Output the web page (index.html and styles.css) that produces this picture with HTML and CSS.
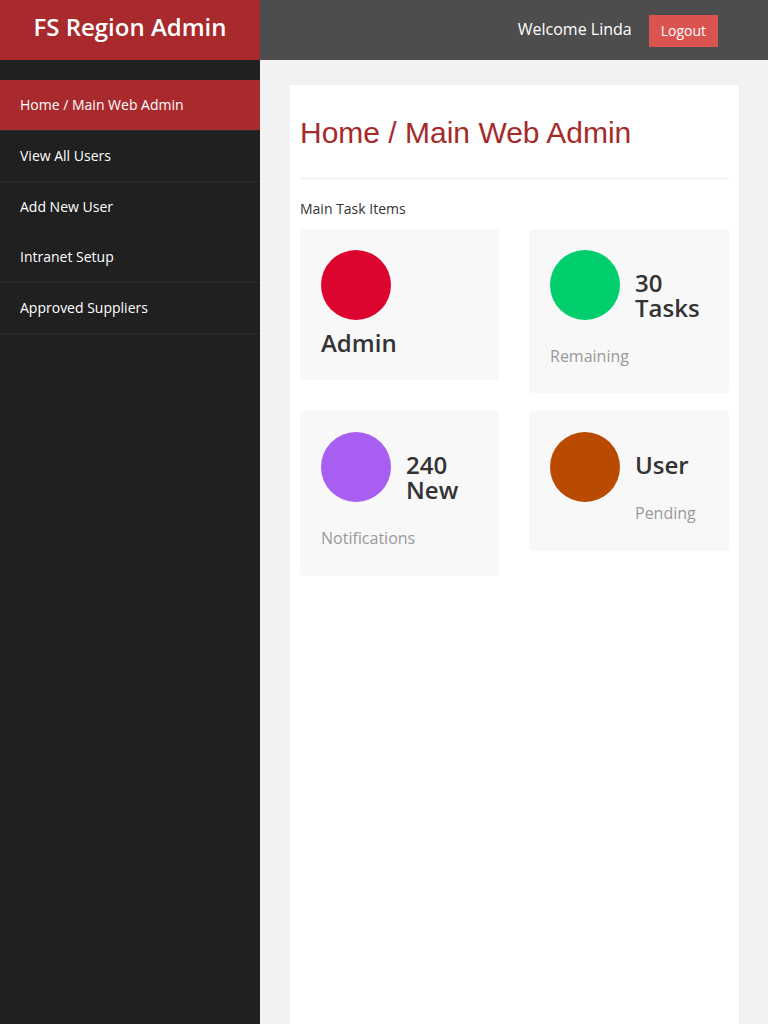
FILE: index.html
```html
<!DOCTYPE html>
<html lang="en">
<head>
<meta charset="utf-8">
<title>FS Region Admin</title>
<link rel="stylesheet" href="styles.css">
</head>
<body>
<header class="topbar">
  <div class="brand">FS Region Admin</div>
  <div class="userbar">
    <span class="welcome">Welcome Linda</span>
    <a class="btn-logout" href="#">Logout</a>
  </div>
</header>
<div class="layout">
  <nav class="sidebar">
    <ul class="nav">
      <li class="nav-item active"><a href="#">Home / Main Web Admin</a></li>
      <li class="nav-item"><a href="#">View All Users</a></li>
      <li class="nav-item no-border"><a href="#">Add New User</a></li>
      <li class="nav-item"><a href="#">Intranet Setup</a></li>
      <li class="nav-item"><a href="#">Approved Suppliers</a></li>
    </ul>
  </nav>
  <main class="main">
    <section class="panel">
      <h1 class="page-title">Home / Main Web Admin</h1>
      <hr class="divider">
      <p class="section-label">Main Task Items</p>
      <div class="cards">
        <div class="card card-compact">
          <span class="dot dot-red"></span>
          <h3 class="card-title clear">Admin</h3>
        </div>
        <div class="card">
          <span class="dot dot-green"></span>
          <h3 class="card-title">30 Tasks</h3>
          <p class="card-sub">Remaining</p>
        </div>
        <div class="card card-tall">
          <span class="dot dot-purple"></span>
          <h3 class="card-title">240 New</h3>
          <p class="card-sub">Notifications</p>
        </div>
        <div class="card card-tall">
          <span class="dot dot-orange"></span>
          <h3 class="card-title">User</h3>
          <p class="card-sub">Pending</p>
        </div>
      </div>
    </section>
  </main>
</div>
</body>
</html>
```

FILE: styles.css
```css
* { box-sizing: border-box; }

html, body {
  margin: 0;
  padding: 0;
}

body {
  font-family: "Open Sans", "Noto Sans", sans-serif;
  font-size: 14px;
  color: #333;
  background: #f2f2f2;
}

a { text-decoration: none; }

.topbar {
  display: flex;
  height: 60px;
}

.brand {
  width: 260px;
  flex: 0 0 260px;
  background: #a82a2c;
  color: #fff;
  text-align: center;
  font-size: 24px;
  font-weight: 600;
  line-height: 34px;
  padding-top: 10px;
}

.userbar {
  flex: 1;
  background: #4d4d4d;
  display: flex;
  justify-content: flex-end;
  align-items: center;
  gap: 17px;
  padding-right: 50px;
}

.welcome {
  color: #fff;
  font-size: 16px;
  line-height: 22px;
  margin-top: -2px;
}

.btn-logout {
  display: inline-block;
  background: #d9534f;
  color: #fff;
  font-size: 14px;
  line-height: 32px;
  height: 32px;
  padding: 0 12px;
  margin-top: 2px;
}

.layout {
  display: flex;
  min-height: 964px;
}

.sidebar {
  width: 260px;
  flex: 0 0 260px;
  background: #202020;
  padding-top: 20px;
}

.nav {
  list-style: none;
  margin: 0;
  padding: 0;
}

.nav-item {
  border-bottom: 1px solid #2c2c2c;
}

.nav-item.no-border {
  border-bottom: 0;
}

.nav-item a {
  display: block;
  padding: 15px 20px;
  line-height: 20px;
  font-size: 14px;
  color: #fff;
}

.nav-item.active {
  background: #a82a2c;
  border-bottom-color: #2a2a2a;
}

.main {
  flex: 1;
  padding: 25px 30px 0 30px;
  display: flex;
}

.panel {
  flex: 1;
  background: #fff;
  padding: 10px;
}

.page-title {
  font-family: "Liberation Sans", Arial, sans-serif;
  font-weight: normal;
  font-size: 30px;
  line-height: 33px;
  color: #a52a2a;
  margin: 21px 0 0;
}

.divider {
  border: 0;
  border-top: 1px solid #eee;
  margin: 29px 0 20px;
  height: 0;
}

.section-label {
  font-size: 14px;
  line-height: 20px;
  color: #333;
  margin: 0 0 10px;
}

.cards {
  display: grid;
  grid-template-columns: 199px 200px;
  column-gap: 30px;
  row-gap: 18px;
  align-items: start;
}

.card {
  display: flow-root;
  background: #f8f8f8;
  border-radius: 4px;
  padding: 21px 21px 26px;
}

.card.card-compact {
  padding-bottom: 25px;
}

.card.card-tall {
  padding-bottom: 27px;
}

.dot {
  float: left;
  width: 70px;
  height: 70px;
  border-radius: 50%;
  margin: 0 15px 10px 0;
}

.dot-red { background: #dc0530; }
.dot-green { background: #00ce6c; }
.dot-purple { background: #a85ef0; }
.dot-orange { background: #b94a00; }

.card-title {
  font-size: 24px;
  font-weight: 600;
  line-height: 25px;
  color: #333;
  margin: 20px 0 0;
}

.card-title.clear {
  clear: both;
}

.card-sub {
  font-size: 16px;
  line-height: 22px;
  color: #999;
  margin: 25px 0 0;
}
```
